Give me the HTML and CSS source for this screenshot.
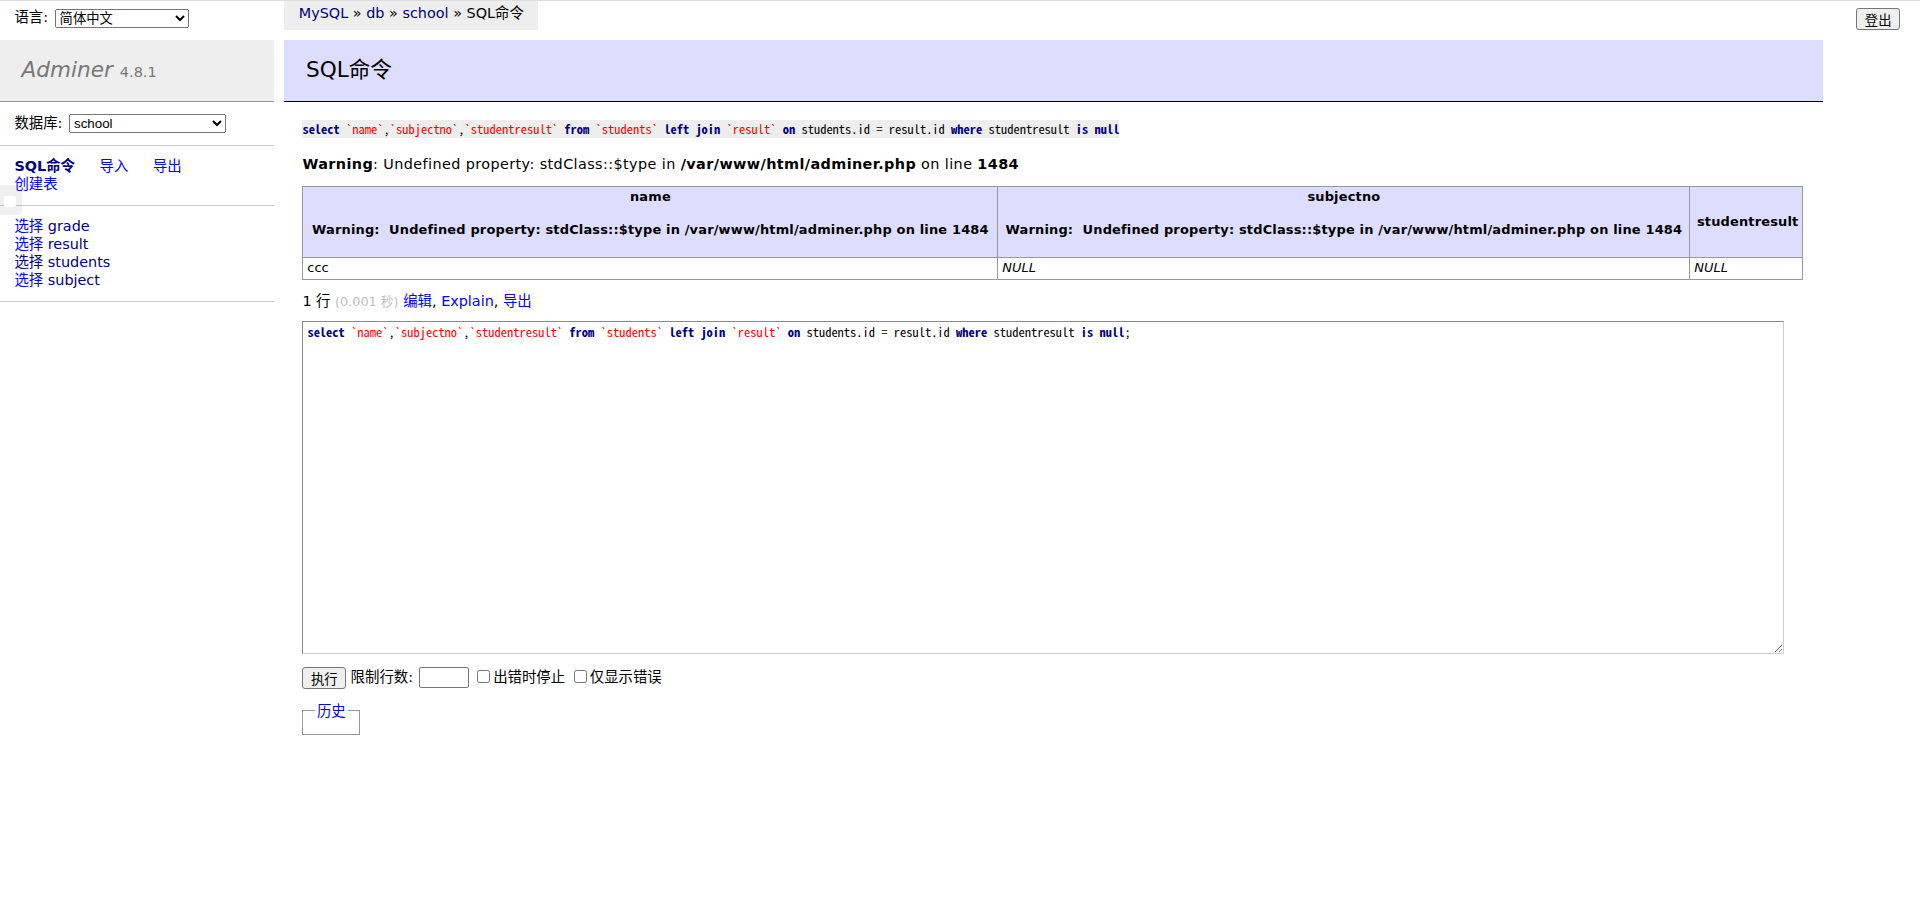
FILE: index.html
```html
<!DOCTYPE html>
<html lang="zh-CN">
<head>
<meta charset="utf-8">
<title>SQL命令 - db - Adminer</title>
<link rel="stylesheet" href="styles.css">
</head>
<body>
<div class="topbar">
  <div class="lang">语言: <select class="ctl lang-select"><option>简体中文</option></select></div>
  <p class="breadcrumb"><a class="visited">MySQL</a> » <a class="visited">db</a> » <a class="visited">school</a> » SQL命令</p>
  <p class="logout"><button class="btn">登出</button></p>
</div>
<div class="main">
  <nav class="menu">
    <h1><a class="h1link">Adminer</a> <span class="version">4.8.1</span></h1>
    <p class="dbs">数据库: <select class="ctl db-select"><option>school</option></select></p>
    <p class="links"><a class="visited active">SQL命令</a> <a>导入</a> <a>导出</a><br><a>创建表</a></p>
    <ul class="tables">
      <li><a>选择</a> <a class="visited">grade</a></li>
      <li><a>选择</a> <a class="visited">result</a></li>
      <li><a class="visited">选择</a> <a class="visited">students</a></li>
      <li><a>选择</a> <a class="visited">subject</a></li>
    </ul>
  </nav>
  <main class="content">
    <h2>SQL命令</h2>
    <div class="inner">
      <pre class="query"><code><b class="kw">select</b> <span class="bac">`name`</span>,<span class="bac">`subjectno`</span>,<span class="bac">`studentresult`</span> <b class="kw">from</b> <span class="bac">`students`</span> <b class="kw">left</b> <b class="kw">join</b> <span class="bac">`result`</span> <b class="kw">on</b> students.id = result.id <b class="kw">where</b> studentresult <b class="kw">is</b> <b class="kw">null</b></code></pre>
      <p class="warn"><b>Warning</b>: Undefined property: stdClass::$type in <b>/var/www/html/adminer.php</b> on line <b>1484</b></p>
      <table class="result">
        <colgroup><col class="c1"><col class="c2"><col class="c3"></colgroup>
        <thead>
          <tr>
            <th>name<br><br>Warning:  Undefined property: stdClass::$type in /var/www/html/adminer.php on line 1484<br><br></th>
            <th>subjectno<br><br>Warning:  Undefined property: stdClass::$type in /var/www/html/adminer.php on line 1484<br><br></th>
            <th>studentresult</th>
          </tr>
        </thead>
        <tbody>
          <tr><td>ccc</td><td><i>NULL</i></td><td><i>NULL</i></td></tr>
        </tbody>
      </table>
      <p class="stats">1 行 <span class="time">(0.001 秒)</span> <a>编辑</a>, <a>Explain</a>, <a>导出</a></p>
      <form class="sqlform">
        <div class="sqlarea-wrap"><div class="sqlarea"><b class="kw">select</b> <span class="bac">`name`</span>,<span class="bac">`subjectno`</span>,<span class="bac">`studentresult`</span> <b class="kw">from</b> <span class="bac">`students`</span> <b class="kw">left</b> <b class="kw">join</b> <span class="bac">`result`</span> <b class="kw">on</b> students.id = result.id <b class="kw">where</b> studentresult <b class="kw">is</b> <b class="kw">null</b>;</div></div>
        <p class="controls"><button class="btn" type="button">执行</button> 限制行数: <input class="ctl size" type="text"> <label><input type="checkbox">出错时停止</label> <label><input type="checkbox">仅显示错误</label></p>
        <div><fieldset class="history"><legend><a>历史</a></legend></fieldset></div>
      </form>
    </div>
  </main>
</div>
<div class="edge-tab"><span></span></div>
</body>
</html>
```

FILE: styles.css
```css
html, body {
  margin: 0;
  padding: 0;
}
body {
  font: 14.4px/1.25 "DejaVu Sans", "Noto Sans CJK SC", sans-serif;
  color: #000;
  background: #fff;
  border-top: 1px solid #dedede;
}
a {
  color: #00f;
  text-decoration: none;
}
a.visited {
  color: #000080;
}

/* top bar */
.topbar {
  display: flex;
  align-items: flex-start;
  height: 38.8px;
}
.lang {
  flex: 0 0 284.4px;
  padding: 4.32px 14.4px;
  line-height: 25.92px;
  box-sizing: border-box;
  white-space: nowrap;
}
.breadcrumb {
  margin: 0;
  padding: 0 14.4px;
  height: 28.8px;
  line-height: 25.92px;
  background: #eee;
  white-space: nowrap;
}
.logout {
  margin: 7.2px 20px 0 auto;
}
.ctl {
  font: 13.33px "Liberation Sans", "Noto Sans CJK SC", sans-serif;
  color: #000;
}
.lang-select {
  width: 134px;
  height: 19px;
  margin-left: 2px;
  vertical-align: middle;
}
.db-select {
  width: 157px;
  height: 19px;
  margin-left: 2px;
  vertical-align: middle;
}
.btn {
  font: 13.33px "Liberation Sans", "Noto Sans CJK SC", sans-serif;
  color: #000;
  background: #efefef;
  border: 1px solid #767676;
  border-radius: 3px;
  padding: 1px 7.5px;
  height: 22px;
  margin: 0;
  vertical-align: middle;
}

/* layout */
.main {
  display: flex;
  align-items: flex-start;
}
.menu {
  flex: 0 0 273.6px;
  width: 273.6px;
}
.content {
  flex: 0 0 1537.6px;
  margin-left: 10.8px;
  padding-bottom: 20px;
}

/* menu */
.menu h1 {
  font-size: 21.6px;
  line-height: 1.25;
  font-weight: normal;
  margin: 0;
  padding: 17.28px 21.6px;
  border-bottom: 1px solid #999;
  color: #777;
  background: #eee;
}
.h1link {
  color: #777;
  font-style: italic;
}
.version {
  font-size: 67%;
  color: #777;
}
.dbs, .links, .tables {
  margin: 0;
  padding: 11.52px 14.4px;
  border-bottom: 1px solid #ccc;
}
.dbs {
  white-space: nowrap;
}
.links a {
  margin-right: 20px;
  white-space: nowrap;
}
.active {
  font-weight: bold;
}
.tables {
  list-style: none;
  white-space: nowrap;
}

/* content */
.content h2 {
  font-size: 21.6px;
  line-height: 1.25;
  font-weight: normal;
  margin: 0 0 20px;
  padding: 17.28px 21.6px;
  border-bottom: 1px solid #000;
  color: #000;
  background: #ddf;
}
.inner {
  padding-left: 18px;
}
.query {
  margin: 0;
  font: 12.48px/14.6px "Noto Sans Mono CJK SC", "Liberation Mono", monospace;
}
.query code {
  background: #eee;
  font: inherit;
}
.kw {
  color: #000080;
  font-weight: bold;
}
.bac {
  color: red;
}
.warn {
  margin: 18px 0 0;
  letter-spacing: 0.4px;
}
.result {
  margin: 12.96px 20px 0 0;
  border-collapse: collapse;
  font-size: 12.96px;
  table-layout: fixed;
  width: 1500px;
}
.result .c1 { width: 695px; }
.result .c2 { width: 692px; }
.result .c3 { width: 113px; }
.result th, .result td {
  border: 1px solid #999;
  white-space: pre;
}
.result th {
  background: #ddf;
  padding: 2.6px 6.5px;
  text-align: center;
  font-weight: bold;
  letter-spacing: 0.17px;
}
.result td {
  padding: 2.6px 3.9px;
}
.stats {
  margin: 11.52px 20px 0 0;
}
.time {
  color: silver;
  font-size: 12.8px;
}
.sqlform {
  margin: 0;
}
.sqlarea-wrap {
  margin-top: 11.52px;
}
.sqlarea {
  box-sizing: border-box;
  width: 1482px;
  height: 333px;
  margin: 0;
  padding: 3px 4px;
  border: 1px solid;
  border-color: #8a8a8a #cdcdcd #cdcdcd #8a8a8a;
  font: 12.48px/14.6px "Noto Sans Mono CJK SC", "Liberation Mono", monospace;
  white-space: pre;
  overflow: auto;
  resize: both;
}
.controls {
  margin: 12.5px 0 0;
}
.size {
  box-sizing: border-box;
  width: 50px;
  height: 21px;
  padding: 1px 2px;
  border: 1px solid #767676;
  border-radius: 2px;
  margin: 0 0 0 1px;
  vertical-align: middle;
}
.controls input[type=checkbox] {
  vertical-align: middle;
  margin: 0 3px 2px 4px;
  width: 13px;
  height: 13px;
}
.history {
  display: inline-block;
  vertical-align: top;
  margin: 13px 7.2px 0 0;
  padding: 7.2px 11.52px;
  border: 1px solid #999;
  min-width: 0;
}
.history legend {
  padding: 0 2px;
}

/* small floating tab at the left edge */
.edge-tab {
  position: absolute;
  left: 0;
  top: 185px;
  width: 22px;
  height: 30px;
  border-radius: 0 5px 5px 0;
  background: rgba(0, 0, 0, 0.06);
}
.edge-tab span {
  position: absolute;
  left: 4px;
  top: 11px;
  width: 12px;
  height: 11px;
  background: #fff;
  border-radius: 2px;
}
```
